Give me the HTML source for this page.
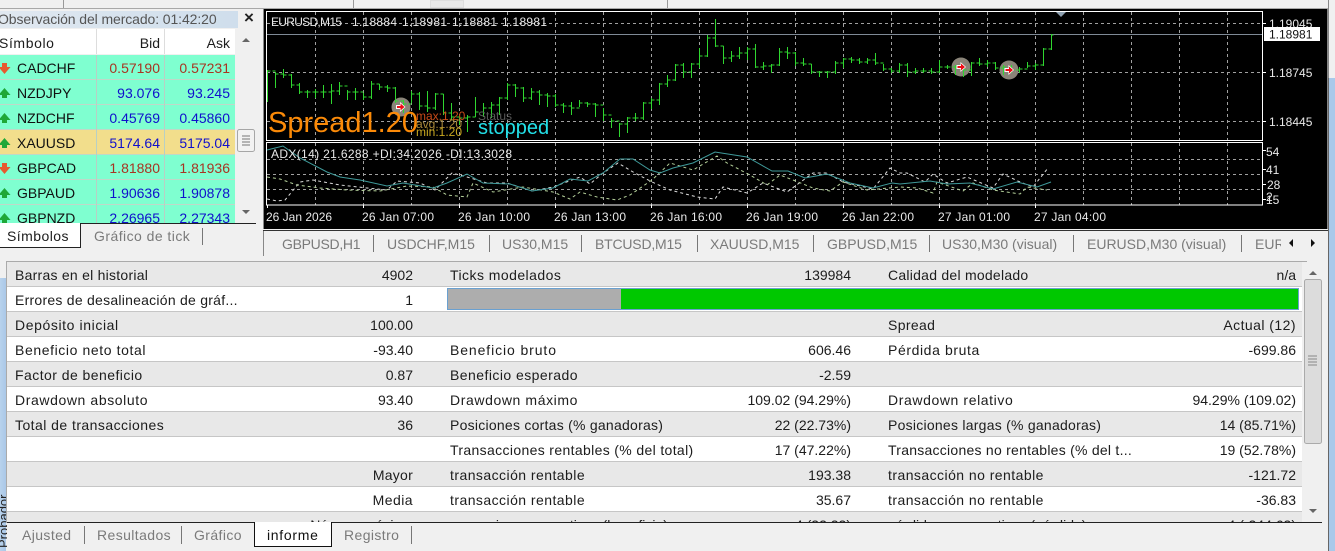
<!DOCTYPE html>
<html><head><meta charset="utf-8"><style>
html,body{margin:0;padding:0;background:#f0f0f0}
#r{position:relative;width:1335px;height:551px;overflow:hidden;background:#f0f0f0;font:14px/18px "Liberation Sans",sans-serif;color:#1c1c1c}
#r div,#r span{position:absolute;white-space:nowrap}
.row{left:7px;width:1295px;height:24px;border-bottom:1px solid #c6c6c6}
.g{background:#e8e8e8}.w{background:#fff}
.a{left:8px;top:4px}.b{right:889px;top:4px}.c{left:443px;top:4px}.d{right:451px;top:4px}.e{left:881px;top:4px}.f{right:6px;top:4px}
.mw{left:0;width:235px;height:24px;background:#7fffd0;border-bottom:1px solid #c0d8c8}
.s{left:17px;top:4px;color:#111}.bid{right:75px;top:4px}.ask{right:5px;top:4px}
.up{color:#1010cc}.dn{color:#a83422}
.t{color:#7a7a7a;top:235px}.tb{color:#7a7a7a;top:526px;letter-spacing:.4px}
.sep{width:1px;background:#777}
.l2{letter-spacing:.25px}.l3{letter-spacing:.35px}.l4{letter-spacing:.45px}.l6{letter-spacing:.6px}.l9{letter-spacing:.9px}
</style></head><body><div id="r">

<!-- top toolbar -->
<div style="left:0;top:8px;width:1335px;height:1px;background:#a8a8a8"></div>
<div style="left:63px;top:0;width:1px;height:8px;background:#999"></div>
<div style="left:353px;top:0;width:1px;height:8px;background:#999"></div>
<div style="left:430px;top:0;width:32px;height:6px;background:#e8e8e8;border:1px solid #ddd"></div>
<div style="left:667px;top:0;width:1px;height:8px;background:#999"></div>

<!-- market watch -->
<div style="left:0;top:9px;width:262px;height:246px;background:#f0f0f0"></div>
<div style="left:0;top:11px;width:238px;height:17px;background:linear-gradient(90deg,#e0e8f0,#cfdeec)"></div>
<span style="left:-2px;top:10px;color:#555;letter-spacing:-.1px">Observación del mercado: 01:42:20</span>
<span style="left:244px;top:9px;color:#222;font-size:17px;font-weight:bold">×</span>
<div style="left:0;top:29px;width:235px;height:25px;background:#fff"></div>
<span class="l6" style="left:-1px;top:34px">Símbolo</span><span style="right:1175px;top:34px">Bid</span><span style="right:1105px;top:34px">Ask</span>
<div style="left:96px;top:29px;width:1px;height:25px;background:#ddd"></div>
<div style="left:164px;top:29px;width:1px;height:25px;background:#ddd"></div>
<div style="left:0;top:29px;width:256px;height:194px;overflow:hidden">
<div class="mw" style="top:26px"><span class="s">CADCHF</span><span class="bid dn">0.57190</span><span class="ask dn">0.57231</span></div>
<div class="mw" style="top:51px"><span class="s">NZDJPY</span><span class="bid up">93.076</span><span class="ask up">93.245</span></div>
<div class="mw" style="top:76px"><span class="s">NZDCHF</span><span class="bid up">0.45769</span><span class="ask up">0.45860</span></div>
<div class="mw" style="top:101px;background:#f2de8c"><span class="s">XAUUSD</span><span class="bid up">5174.64</span><span class="ask up">5175.04</span></div>
<div class="mw" style="top:126px"><span class="s">GBPCAD</span><span class="bid dn">1.81880</span><span class="ask dn">1.81936</span></div>
<div class="mw" style="top:151px"><span class="s">GBPAUD</span><span class="bid up">1.90636</span><span class="ask up">1.90878</span></div>
<div class="mw" style="top:176px"><span class="s">GBPNZD</span><span class="bid up">2.26965</span><span class="ask up">2.27343</span></div>
<div style="left:96px;top:26px;width:1px;height:170px;background:#b8d0c4"></div>
<div style="left:164px;top:26px;width:1px;height:170px;background:#b8d0c4"></div>
</div>
<svg style="position:absolute;left:0;top:55px" width="12" height="168">
<g fill="#e65a30"><path d="M2 8h5v4h3.500L4.500 19-1.500 12H2z"/><path d="M2 108h5v4h3.500L4.500 119-1.500 112H2z"/></g>
<g fill="#1fa838"><path d="M4.500 33L10.500 40H7v3H2v-3h-3.500z"/><path d="M4.500 58L10.500 65H7v3H2v-3h-3.500z"/><path d="M4.500 83L10.500 90H7v3H2v-3h-3.500z"/><path d="M4.500 133L10.500 140H7v3H2v-3h-3.500z"/><path d="M4.500 158L10.500 165H7v3H2v-3h-3.500z"/></g>
</svg>
<!-- mw scrollbar -->
<svg style="position:absolute;left:236px;top:29px" width="20" height="194">
<path d="M6 13l4-4 4 4z" fill="#666"/><path d="M6 181l4 4 4-4z" fill="#666"/>
<rect x="1.500" y="100.500" width="17" height="22" rx="2" fill="#f2f2f2" stroke="#a6a6a6"/>
<path d="M6 107h8M6 110h8M6 113h8M6 116h8" stroke="#777"/>
</svg>
<!-- mw tabs -->
<div style="left:81px;top:223px;width:175px;height:1px;background:#222"></div>
<div style="left:0;top:223px;width:80px;height:24px;background:#fff;border-right:1px solid #222;border-bottom:1px solid #222"></div>
<span class="l4" style="left:7px;top:227px">Símbolos</span>
<span class="l4" style="left:94px;top:227px;color:#7a7a7a">Gráfico de tick</span>
<div class="sep" style="left:202px;top:228px;height:17px"></div>

<!-- chart -->
<div style="left:263px;top:9px;width:1px;height:220px;background:#888"></div>
<svg style="position:absolute;left:264px;top:9px;background:#000" width="1063" height="220" viewBox="264 9 1063 220" font-family="Liberation Sans" font-size="12" fill="#e8e8e8">
<g stroke="#a0a0a0" stroke-dasharray="3 3" fill="none" shape-rendering="crispEdges">
<path d="M267 23.500H1262M267 72.500H1262M267 121.500H1262"/>
<path d="M267 159.500H1262M267 174.500H1262M267 189.500H1262"/>
<path d="M315.500 12V140M363.500 12V140M411.500 12V140M459.500 12V140M507.500 12V140M555.500 12V140M603.500 12V140M651.500 12V140M699.500 12V140M747.500 12V140M795.500 12V140M843.500 12V140M891.500 12V140M939.500 12V140M987.500 12V140M1035.500 12V140M1083.500 12V140M1131.500 12V140M1179.500 12V140M1227.500 12V140"/>
<path d="M315.500 143V205M363.500 143V205M411.500 143V205M459.500 143V205M507.500 143V205M555.500 143V205M603.500 143V205M651.500 143V205M699.500 143V205M747.500 143V205M795.500 143V205M843.500 143V205M891.500 143V205M939.500 143V205M987.500 143V205M1035.500 143V205M1083.500 143V205M1131.500 143V205M1179.500 143V205M1227.500 143V205"/>
</g>
<path d="M267 34.500H1262" stroke="#7f8a96" shape-rendering="crispEdges"/>
<g stroke="#fff" fill="none" shape-rendering="crispEdges">
<rect x="266.500" y="11.500" width="996" height="129"/>
<rect x="266.500" y="142.500" width="996" height="62.500"/>
<path d="M267.500 205V208M363.500 205V208M459.500 205V208M555.500 205V208M651.500 205V208M747.500 205V208M843.500 205V208M939.500 205V208M1035.500 205V208M1263 23.500h3M1263 72.500h3M1263 121.500h3M1263 150.500h3M1263 169.500h3M1263 184.500h3M1263 199.500h3"/>
</g>
<path d="M1056 12h10l-5 5z" fill="#8ea0b0"/>
<!-- marker discs under bars -->
<circle cx="401" cy="107" r="9.500" fill="#8a8478"/><circle cx="961" cy="67" r="9.500" fill="#8a8478"/><circle cx="1009" cy="70" r="9.500" fill="#8a8478"/>
<!-- bars -->
<path fill="none" stroke="#2fd62f" shape-rendering="crispEdges" d="M267.500 70V102V71h3m2 0h3M275.500 72V88V74h3m2 0h3M283.500 69V78V75h3m2 0h3M291.500 74V88V85h3m2 0h3M299.500 83V94V92h3m2 0h3M307.500 90V98V92h3m2 0h3M315.500 89V98V92h3m2 0h3M323.500 85V98V92h3m2 0h3M331.500 84V104V91h3m2 0h3M339.500 82V95V86h3m2 0h3M347.500 90V100V92h3m2 0h3M355.500 88V100V92h3m2 0h3M363.500 93V100V97h3m2 0h3M371.500 81V99V84h3m2 0h3M379.500 84V90V87h3m2 0h3M387.500 85V92V88h3m2 0h3M395.500 87V103V101h3m2 0h3M403.500 100V113V104h3m2 0h3M411.500 91V103V94h3m2 0h3M419.500 92V110V106h3m2 0h3M427.500 91V112V108h3m2 0h3M435.500 93V110V94h3m2 0h3M443.500 94V115V113h3m2 0h3M451.500 103V120V117h3m2 0h3M459.500 115V125V118h3m2 0h3M467.500 115V132V117h3m2 0h3M475.500 97V117V112h3m2 0h3M483.500 103V117V108h3m2 0h3M491.500 102V118V105h3m2 0h3M499.500 97V115V98h3m2 0h3M507.500 83V100V85h3m2 0h3M515.500 84V97V88h3m2 0h3M523.500 87V102V98h3m2 0h3M531.500 88V100V92h3m2 0h3M539.500 90V105V95h3m2 0h3M547.500 93V107V96h3m2 0h3M555.500 94V107V105h3m2 0h3M563.500 103V113V106h3m2 0h3M571.500 102V115V108h3m2 0h3M579.500 100V107V103h3m2 0h3M587.500 102V107V104h3m2 0h3M595.500 103V117V105h3m2 0h3M603.500 108V121V115h3m2 0h3M611.500 118V128V121h3m2 0h3M619.500 123V137V124h3m2 0h3M627.500 117V133V118h3m2 0h3M635.500 113V121V118h3m2 0h3M643.500 102V120V103h3m2 0h3M651.500 98V109V100h3m2 0h3M659.500 83V105V84h3m2 0h3M667.500 75V87V80h3m2 0h3M675.500 64V81V65h3m2 0h3M683.500 63V78V72h3m2 0h3M691.500 63V78V64h3m2 0h3M699.500 48V68V56h3m2 0h3M707.500 35V57V38h3m2 0h3M715.500 19V47V46h3m2 0h3M723.500 46V64V58h3m2 0h3M731.500 51V62V56h3m2 0h3M739.500 47V59V53h3m2 0h3M747.500 47V60V49h3m2 0h3M755.500 44V68V67h3m2 0h3M763.500 62V70V66h3m2 0h3M771.500 64V73V65h3m2 0h3M779.500 48V66V52h3m2 0h3M787.500 47V59V53h3m2 0h3M795.500 52V66V63h3m2 0h3M803.500 58V66V64h3m2 0h3M811.500 64V74V72h3m2 0h3M819.500 71V77V72h3m2 0h3M827.500 71V78V72h3m2 0h3M835.500 61V74V63h3m2 0h3M843.500 58V68V59h3m2 0h3M851.500 57V63V60h3m2 0h3M859.500 58V64V62h3m2 0h3M867.500 58V64V60h3m2 0h3M875.500 53V65V63h3m2 0h3M883.500 64V71V69h3m2 0h3M891.500 68V73V71h3m2 0h3M899.500 63V73V65h3m2 0h3M907.500 63V77V72h3m2 0h3M915.500 68V74V71h3m2 0h3M923.500 68V73V71h3m2 0h3M931.500 68V74V72h3m2 0h3M939.500 60V73V67h3m2 0h3M947.500 65V69V67h3m2 0h3M955.500 65V75V66h3m2 0h3M963.500 67V77V70h3m2 0h3M971.500 62V76V63h3m2 0h3M979.500 58V66V64h3m2 0h3M987.500 60V67V63h3m2 0h3M995.500 62V70V68h3m2 0h3M1003.500 65V75V67h3m2 0h3M1011.500 65V73V70h3m2 0h3M1019.500 67V73V69h3m2 0h3M1027.500 62V68V66h3m2 0h3M1035.500 63V70V65h3m2 0h3M1043.500 48V66V49h3m2 0h3M1051.500 34V50V35h2"/>
<!-- indicator -->
<g fill="none" stroke-width="1">
<path stroke="#dcdcdc" stroke-dasharray="3 3" d="M267 199L277 201 285 200 300 182 313 180 340 185 367 188 387 190 397 181 420 183 435 190 452 173 467 177 487 183 507 183 532 191 553 187 580 177 590 184 603 173 618 163 633 172 652 182 670 190 697 197 715 199 723 187 747 193 763 183 787 192 813 173 827 173 843 182 873 189 890 168 900 173 907 173 925 182 933 174 947 183 967 177 993 188 1003 174 1020 182 1033 187 1048 168"/>
<path stroke="#b4d09a" stroke-dasharray="3 3" d="M267 177L280 179 297 185 320 188 347 190 380 191 407 186 433 187 447 195 467 197 473 183 493 192 523 187 553 192 570 199 580 192 597 197 617 200 630 195 652 180 670 163 693 170 717 156 727 163 750 175 767 185 780 175 793 180 813 188 830 191 843 182 867 190 900 187 917 188 933 193 937 182 963 191 973 183 993 190 1020 194 1027 187 1047 190"/>
<path stroke="#3f9a9a" d="M267 150L283 146 300 158 327 172 340 177 360 180 387 186 403 183 433 188 447 183 467 174 483 183 510 184 532 191 553 188 570 179 588 181 603 173 620 159 633 159 650 170 660 173 673 168 693 163 715 152 747 157 772 171 788 171 805 178 827 174 850 183 873 188 892 183 900 184 930 181 947 184 970 183 993 189 1017 182 1037 187 1051 182"/>
</g>
<!-- marker arrows: white tail and outline, saturated red head -->
<g transform="translate(400.500 107)"><path d="M-4.500-2h4v-3l5.500 5-5.500 5v-3h-4z" fill="#fff"/><path d="M-3.500-1h3.500v-2.500l4 3.500-4 3.500v-2.500h-3.500z" fill="#f00a14"/></g>
<g transform="translate(961 67)"><path d="M-4.500-2h4v-3l5.500 5-5.500 5v-3h-4z" fill="#fff"/><path d="M-3.500-1h3.500v-2.500l4 3.500-4 3.500v-2.500h-3.500z" fill="#f00a14"/></g>
<g transform="translate(1009 70)"><path d="M-4.500-2h4v-3l5.500 5-5.500 5v-3h-4z" fill="#fff"/><path d="M-3.500-1h3.500v-2.500l4 3.500-4 3.500v-2.500h-3.500z" fill="#f00a14"/></g>
<!-- text -->
<text x="271" y="26" textLength="71" lengthAdjust="spacing">EURUSD,M15</text>
<text x="352" y="26" textLength="45">1.18884</text><text x="402" y="26" textLength="45">1.18981</text><text x="452" y="26" textLength="45">1.18881</text><text x="502" y="26" textLength="45">1.18981</text>
<text x="271" y="158" textLength="241" lengthAdjust="spacing">ADX(14) 21.6288 +DI:34.2026 -DI:13.3028</text>
<text x="268" y="132" font-size="29" fill="#fb8a08">Spread1.20</text>
<text x="416" y="120" font-size="12" fill="#c84a18">max:1.20</text>
<text x="416" y="128" font-size="12" fill="#a88838">avg:1.20</text>
<text x="416" y="136" font-size="12" fill="#c8a820">min:1.20</text>
<text x="478" y="120" font-size="12" fill="#585858">Status</text>
<text x="478" y="134" font-size="20" fill="#22e0e8">stopped</text>
<g>
<text x="266" y="221">26 Jan 2026</text><text x="362" y="221" textLength="72">26 Jan 07:00</text><text x="458" y="221" textLength="72">26 Jan 10:00</text><text x="554" y="221" textLength="72">26 Jan 13:00</text><text x="650" y="221" textLength="72">26 Jan 16:00</text><text x="746" y="221" textLength="72">26 Jan 19:00</text><text x="842" y="221" textLength="72">26 Jan 22:00</text><text x="938" y="221" textLength="72">27 Jan 01:00</text><text x="1034" y="221" textLength="72">27 Jan 04:00</text>
<text x="1269" y="28">1.19045</text><text x="1269" y="77">1.18745</text><text x="1269" y="126">1.18445</text>
<rect x="1264" y="27" width="56" height="14" fill="#fff"/><text x="1269" y="38.500" fill="#111">1.18981</text>
<text x="1266" y="156">54</text><text x="1266" y="174">41</text><text x="1267" y="189">28</text><text x="1266" y="204">15</text><text x="1266" y="201">2</text>
</g>
</svg>
<div style="left:1327px;top:9px;width:1px;height:220px;background:#888"></div>
<div style="left:263px;top:230px;width:1065px;height:1px;background:#333"></div>
<!-- chart tabs -->
<span class="t" style="left:282px;letter-spacing:-.3px">GBPUSD,H1</span><div class="sep" style="left:373px;top:235px;height:17px"></div>
<span class="t" style="left:387px">USDCHF,M15</span><div class="sep" style="left:489px;top:235px;height:17px"></div>
<span class="t" style="left:502px">US30,M15</span><div class="sep" style="left:581px;top:235px;height:17px"></div>
<span class="t" style="left:595px;letter-spacing:-.2px">BTCUSD,M15</span><div class="sep" style="left:697px;top:235px;height:17px"></div>
<span class="t" style="left:710px">XAUUSD,M15</span><div class="sep" style="left:813px;top:235px;height:17px"></div>
<span class="t" style="left:827px">GBPUSD,M15</span><div class="sep" style="left:929px;top:235px;height:17px"></div>
<span class="t" style="left:942px">US30,M30 (visual)</span><div class="sep" style="left:1073px;top:235px;height:17px"></div>
<span class="t" style="left:1087px">EURUSD,M30 (visual)</span><div class="sep" style="left:1241px;top:235px;height:17px"></div>
<div style="left:1255px;top:235px;width:26px;height:18px;overflow:hidden"><span style="left:0;top:0;color:#7a7a7a">EURUSD</span></div>
<svg style="position:absolute;left:1284px;top:236px" width="36" height="14"><path d="M9 3v8l-4-4zM27 3v8l4-4z" fill="#111"/></svg>
<div style="left:263px;top:231px;width:1px;height:25px;background:#888"></div>
<div style="left:1328px;top:0;width:7px;height:78px;background:#f0f0f0;border-left:1px solid #888"></div>
<div style="left:1328px;top:78px;width:7px;height:473px;background:#a9c9ea;border-left:1px solid #666"></div>

<!-- report -->
<div style="left:0;top:258px;width:1328px;height:293px;background:#f0f0f0"></div>
<div style="left:0;top:278px;width:6px;height:273px;background:linear-gradient(90deg,#b8d2ec,#aac8e8)"></div>
<span style="left:-5px;top:528px;font-size:13px;color:#222;transform:rotate(-90deg);transform-origin:10px 10px">Probador</span>
<div style="left:6px;top:261px;width:1px;height:262px;background:#aaa"></div>
<div style="left:7px;top:261px;width:1300px;height:1px;background:#aaa"></div>
<div style="left:0;top:262px;width:1302px;height:261px;overflow:hidden">
<div style="left:0;top:0;width:1302px;height:260px">
<div class="row g" style="top:0"><span class="a l2">Barras en el historial</span><span class="b">4902</span><span class="c l4">Ticks modelados</span><span class="d">139984</span><span class="e l2">Calidad del modelado</span><span class="f">n/a</span></div>
<div class="row w" style="top:25px"><span class="a l2">Errores de desalineación de gráf...</span><span class="b">1</span>
<div style="left:440px;top:1px;width:173px;height:20px;background:#adadad;border:1px solid #6aa0d0;border-right:0"></div>
<div style="left:614px;top:1px;width:677px;height:20px;background:#00c800;border:1px solid #6aa0d0;border-left:0"></div></div>
<div class="row g" style="top:50px"><span class="a l6">Depósito inicial</span><span class="b">100.00</span><span class="e l3">Spread</span><span class="f l4">Actual (12)</span></div>
<div class="row w" style="top:75px"><span class="a l6">Beneficio neto total</span><span class="b">-93.40</span><span class="c l9">Beneficio bruto</span><span class="d">606.46</span><span class="e l6">Pérdida bruta</span><span class="f">-699.86</span></div>
<div class="row g" style="top:100px"><span class="a l4">Factor de beneficio</span><span class="b">0.87</span><span class="c l4">Beneficio esperado</span><span class="d">-2.59</span></div>
<div class="row w" style="top:125px"><span class="a l6">Drawdown absoluto</span><span class="b">93.40</span><span class="c l6">Drawdown máximo</span><span class="d">109.02 (94.29%)</span><span class="e l6">Drawdown relativo</span><span class="f">94.29% (109.02)</span></div>
<div class="row g" style="top:150px"><span class="a l4">Total de transacciones</span><span class="b">36</span><span class="c l2">Posiciones cortas (% ganadoras)</span><span class="d">22 (22.73%)</span><span class="e l2">Posiciones largas (% ganadoras)</span><span class="f">14 (85.71%)</span></div>
<div class="row w" style="top:175px"><span class="c l3">Transacciones rentables (% del total)</span><span class="d">17 (47.22%)</span><span class="e l2">Transacciones no rentables (% del t...</span><span class="f">19 (52.78%)</span></div>
<div class="row g" style="top:200px"><span class="b l2">Mayor</span><span class="c l4">transacción rentable</span><span class="d">193.38</span><span class="e l4">transacción no rentable</span><span class="f">-121.72</span></div>
<div class="row w" style="top:225px"><span class="b l4">Media</span><span class="c l4">transacción rentable</span><span class="d">35.67</span><span class="e l4">transacción no rentable</span><span class="f">-36.83</span></div>
<div class="row g" style="top:250px"><span class="b">Número máximo</span><span class="c">ganancias consecutivas (beneficio)</span><span class="d">4 (32.22)</span><span class="e">pérdidas consecutivas (pérdida)</span><span class="f">4 (-244.63)</span></div>
</div></div>
<!-- report scrollbar -->
<svg style="position:absolute;left:1302px;top:262px" width="20" height="260">
<rect width="20" height="260" fill="#f0f0f0"/>
<path d="M7 13l4-4 4 4zM7 247l4 4 4-4z" fill="#666"/>
<rect x="2.500" y="17.500" width="17" height="164" rx="2" fill="#dcdcdc" stroke="#aaa"/>
<path d="M6 94h9M6 97h9M6 100h9M6 103h9" stroke="#888"/>
</svg>
<!-- bottom tabs -->
<div style="left:7px;top:522px;width:1315px;height:1px;background:#222"></div>
<div style="left:7px;top:523px;width:1315px;height:28px;background:#f0f0f0"></div>
<div style="left:254px;top:522px;width:76px;height:24px;background:#fff;border:1px solid #111;border-top:0"></div>
<span class="tb" style="left:22px">Ajusted</span><div class="sep" style="left:84px;top:526px;height:18px"></div>
<span class="tb" style="left:97px">Resultados</span><div class="sep" style="left:181px;top:526px;height:18px"></div>
<span class="tb" style="left:194px">Gráfico</span>
<span class="tb" style="left:267px;color:#111;letter-spacing:.7px">informe</span>
<span class="tb" style="left:344px">Registro</span><div class="sep" style="left:411px;top:526px;height:18px"></div>
</div></body></html>
